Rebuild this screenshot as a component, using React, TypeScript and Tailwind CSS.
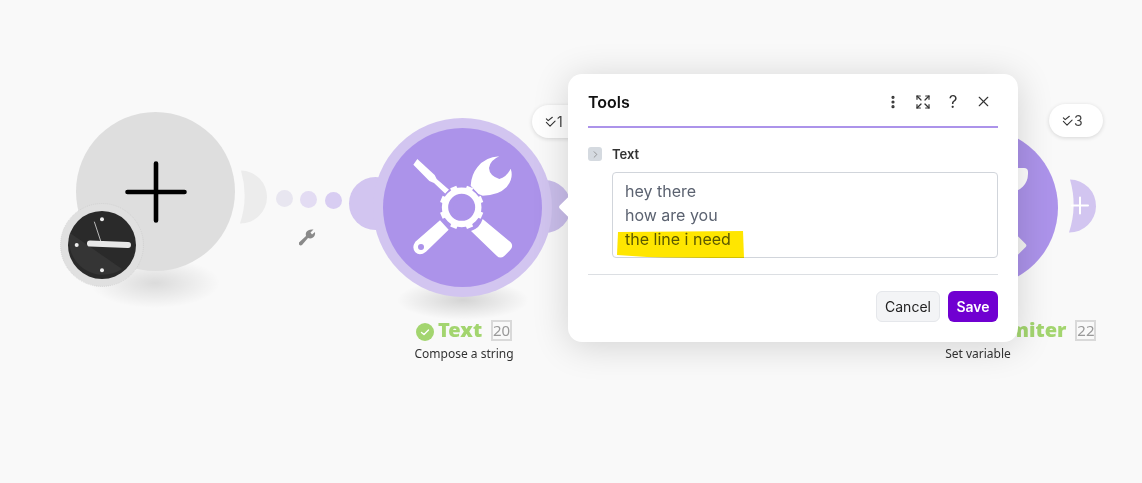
import { EllipsisVertical, Expand, X, ChevronRight } from "lucide-react";

function DoubleCheck() {
  return (
    <svg width="11" height="12" viewBox="0 0 12 12" fill="none" stroke="#333" strokeWidth="1.2" strokeLinecap="round" strokeLinejoin="round">
      <path d="M1.5 2.5 3.5 4.5 8 .8" />
      <path d="M1.5 6.5 5.5 10.5 11 5" />
    </svg>
  );
}

function RunPill({ count, className }: { count: number; className: string }) {
  return (
    <div className={`absolute flex h-[33px] items-center gap-[1px] rounded-full bg-white pl-[13px] text-sm text-[#444] shadow-[0_1px_4px_rgba(0,0,0,0.14)] ${className}`}>
      <DoubleCheck />
      <span>{count}</span>
    </div>
  );
}

function Lune({ className, fill, children }: { className: string; fill: string; children?: React.ReactNode }) {
  return (
    <svg className={`absolute ${className}`} width="30" height="56" viewBox="0 0 30 56">
      <path d="M1 1.5A26.3 26.3 0 0 1 0 54.5 A89 89 0 0 0 1 1.5Z" fill={fill} />
      {children}
    </svg>
  );
}

function ClockIcon() {
  return (
    <svg className="absolute left-[60px] top-[203px]" width="84" height="84" viewBox="0 0 84 84">
      <circle cx="42" cy="42" r="41.5" fill="#e0e0e0" stroke="#c9c9c9" strokeWidth="0.6" strokeDasharray="1 1" />
      <circle cx="42" cy="42" r="34" fill="#2a2a2a" />
      <path d="M10 30 62 66A34 34 0 0 1 10 30Z" fill="#353535" />
      <circle cx="42" cy="16.3" r="2" fill="#eee" />
      <circle cx="16.7" cy="42" r="2" fill="#eee" />
      <circle cx="42" cy="67.3" r="2" fill="#eee" />
      <path d="M34.3 18.7 41 39" stroke="#ddd" strokeWidth="0.8" />
      <path d="M30 40.5 68 42" stroke="#e8e8e8" strokeWidth="6" strokeLinecap="round" />
    </svg>
  );
}

const TEETH = [22.5, 67.5, 112.5, 157.5, 202.5, 247.5, 292.5, 337.5];

// coordinates follow a 3x crop of the node, hence the odd viewBox
function ToolsIcon({ className }: { className: string }) {
  return (
    <svg className={`absolute ${className}`} width="114" height="110" viewBox="210 160 342 330" fill="#fff">
      <path d="M232 178 284 226 290 238 327 270 316 282 282 250 268 244 220 195Z" />
      <path d="M392 258Q394 225 412 203 435 172 478 170 450 182 447 205 448 228 478 238 500 232 512 207 522 235 500 262 475 288 428 288L414 282Z" />
      <path fillRule="evenodd" d="M300 362 326 390 258 456Q240 470 226 458 214 444 226 426ZM243 433A9 9 0 1 0 243.1 451 9 9 0 1 0 243 433Z" />
      <path d="M428 358 512 428Q522 440 510 452L492 470Q480 478 470 468L393 394Q420 385 428 358Z" />
      <circle cx="365" cy="323" r="45" fill="none" stroke="#ac93ea" strokeWidth="38" />
      <circle cx="365" cy="323" r="50" fill="none" stroke="#fff" strokeWidth="19" />
      {TEETH.map((a) => (
        <rect key={a} x="355" y="257" width="20" height="22" transform={`rotate(${a} 365 323)`} />
      ))}
    </svg>
  );
}

function NodeLabel({ name, id, sub, className }: { name: string; id: number; sub: string; className: string }) {
  return (
    <div className={`absolute flex flex-col items-center font-['Noto_Sans',sans-serif] ${className}`}>
      <div className="flex h-[24px] items-center">
        <span className="mr-[4px] mt-[4px] flex h-[18px] w-[18px] items-center justify-center rounded-full bg-[#a3d56f]">
          <svg width="10" height="10" viewBox="0 0 10 10" fill="none" stroke="#fff" strokeWidth="1.4" strokeLinecap="round" strokeLinejoin="round">
            <path d="M1.5 5.5 4 7.5 8.5 3" />
          </svg>
        </span>
        <span className="text-[20px] font-black leading-6 text-[#a3d56f]">{name}</span>
        <span className="ml-[9px] flex h-[21px] w-[21px] items-center justify-center border-2 border-[#d9d9d9] text-[15px] text-[#999]">{id}</span>
      </div>
      <div className="mt-[4px] text-xs leading-4 text-[#333]">{sub}</div>
    </div>
  );
}

export default function App() {
  return (
    <div className="relative h-[483px] w-[1142px] overflow-hidden bg-[#f9f9f9] font-['Inter',sans-serif]">
      {/* trigger node */}
      <div className="absolute left-[90px] top-[258px] h-[50px] w-[130px] bg-[radial-gradient(closest-side,rgba(0,0,0,0.12),rgba(0,0,0,0))]" />
      <Lune className="left-[240px] top-[169px]" fill="#ececec" />
      <div className="absolute left-[76px] top-[112px] flex h-[159px] w-[159px] items-center justify-center rounded-full bg-[#dedede]">
        <svg width="62" height="62" viewBox="0 0 62 62" stroke="#000" strokeWidth="4.6" strokeLinecap="round">
          <path d="M31 2.5V59.5M2.5 31H59.5" />
        </svg>
      </div>
      <ClockIcon />

      {/* link dots */}
      <div className="absolute left-[276px] top-[190px] h-[17px] w-[17px] rounded-full bg-[#e8e6f0]" />
      <div className="absolute left-[300px] top-[191px] h-[17px] w-[17px] rounded-full bg-[#e3dcf3]" />
      <div className="absolute left-[325px] top-[192px] h-[17px] w-[17px] rounded-full bg-[#d8cdf2]" />
      <svg className="absolute left-[298px] top-[228px]" width="18" height="18" viewBox="0 0 18 18" fill="#8a8a8a">
        <path d="M1 14.5 8 8Q7 4 10 2.5 12.5 1 15.5 1.5L12.5 4.5 14 6.5 17 4Q17.5 7.5 15 9.5 12.5 11 10 10L4 17Q2.5 18 1 16.5Z" />
      </svg>

      {/* text node */}
      <div className="absolute left-[397px] top-[280px] h-[40px] w-[132px] bg-[radial-gradient(closest-side,rgba(0,0,0,0.15),rgba(0,0,0,0))]" />
      <div className="absolute left-[349px] top-[177px] h-[53px] w-[53px] rounded-full bg-[#d2c5f0]" />
      <div className="absolute left-[518px] top-[180px] h-[53px] w-[53px] rounded-full bg-[#c9bdea]" />
      <div className="absolute left-[373px] top-[118px] flex h-[179px] w-[179px] items-center justify-center rounded-full bg-[#d2c5f0]">
        <div className="h-[159px] w-[159px] rounded-full bg-[#ac93ea]" />
      </div>
      <ToolsIcon className="left-[410px] top-[153px]" />
      <RunPill count={1} className="left-[532px] top-[105px] w-[70px]" />
      <NodeLabel name="Text" id={20} sub="Compose a string" className="left-[413px] top-[318px] w-[102px]" />

      {/* last node, mostly behind the dialog */}
      <Lune className="left-[1069px] top-[178px]" fill="#d2c5f0">
        <path d="M11 5.5V21.5M3 13.5H19" transform="translate(0 14)" stroke="#fff" strokeWidth="2" strokeLinecap="round" />
      </Lune>
      <div className="absolute left-[899px] top-[128px] h-[159px] w-[159px] rounded-full bg-[#ac93ea]" />
      <div className="absolute left-[1010px] top-[168px] h-[24px] w-[18px] rounded-br-[18px] rounded-tr-[4px] bg-white" />
      <div className="absolute left-[1009px] top-[238px] h-[15px] w-[15px] rotate-45 rounded-[2px] bg-[#f4f4f4]" />
      <RunPill count={3} className="left-[1049px] top-[104px] w-[54px]" />
      <NodeLabel name="Set Line Delimiter" id={22} sub="Set variable" className="left-[851px] top-[318px] w-[254px]" />

      {/* dialog */}
      <div className="absolute left-[568px] top-[74px] flex h-[268px] w-[450px] flex-col rounded-[14px] bg-white px-5 shadow-[0_4px_36px_rgba(0,0,0,0.16)]">
        <div className="absolute -left-[6px] top-[124px] h-[18px] w-[18px] rotate-45 rounded-[2px] bg-white" />
        <div className="relative flex h-[54px] items-center justify-between border-b-2 border-[#ac93ea] pt-[3px]">
          <h2 className="text-base font-semibold leading-6 text-[#111]">Tools</h2>
          <div className="flex items-center text-[#333]">
            <span className="flex w-[30px] justify-center"><EllipsisVertical size={16} strokeWidth={2.8} /></span>
            <span className="flex w-[30px] justify-center"><Expand size={16} strokeWidth={1.8} /></span>
            <span className="flex w-[30px] justify-center text-[17px] leading-5">?</span>
            <span className="flex w-[30px] justify-center"><X size={17} strokeWidth={1.6} /></span>
          </div>
        </div>
        <div className="relative mt-[18px] flex items-center gap-[10px]">
          <span className="flex h-[14px] w-[14px] items-center justify-center rounded-[3px] bg-[#d5dae0] text-[#777]">
            <ChevronRight size={11} strokeWidth={1.5} />
          </span>
          <span className="text-[13px] font-semibold leading-4 text-[#333]">Text</span>
        </div>
        <div className="relative ml-[24px] mt-[10px] h-[86px] rounded border border-[#d1d5db] px-3 py-[6px] text-base leading-6 text-[#5b6270]">
          <div>hey there</div>
          <div>how are you</div>
          <div>the line i need</div>
          <svg className="absolute left-[4px] top-[57px] mix-blend-multiply" width="128" height="29" viewBox="0 0 128 29" fill="#ffe600">
            <path d="M1 2 126 1 127 28Q60 28 30 27L0 25Z" />
          </svg>
        </div>
        <div className="mt-4 border-t border-[#dcdfe3]" />
        <div className="mt-4 flex justify-end gap-2">
          <button className="h-[31px] w-[64px] rounded-md border border-[#e5e7eb] bg-[#f3f4f6] text-sm text-[#222]">Cancel</button>
          <button className="h-[31px] w-[50px] rounded-md bg-[#7000d1] text-sm font-semibold text-white">Save</button>
        </div>
      </div>
    </div>
  );
}
